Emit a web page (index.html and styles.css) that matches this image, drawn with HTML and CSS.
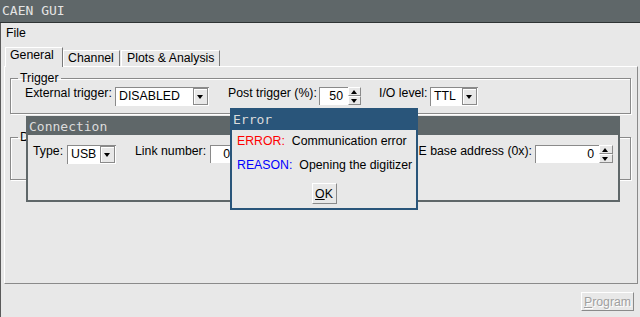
FILE: index.html
```
<!DOCTYPE html>
<html lang="en">
<head>
	<meta charset="UTF-8">
	<title>CAEN GUI</title>
	<link rel="stylesheet" href="styles.css">
</head>
<body>
<div class="titlebar">CAEN GUI</div>
<div class="main">
	<div class="menubar"><span class="menu-item">File</span></div>
	<div class="tabs">
		<span class="tab tab-active tab-general">General</span>
		<span class="tab tab-channel">Channel</span>
		<span class="tab tab-plots">Plots &amp; Analysis</span>
	</div>
	<div class="panel">
		<fieldset class="group group-trigger">
			<legend>Trigger</legend>
			<div class="row">
				<span class="lbl lbl-ext">External trigger:</span>
				<span class="combo combo-ext"><span class="combo-val">DISABLED</span><span class="combo-btn"></span></span>
				<span class="lbl lbl-post">Post trigger (%):</span>
				<span class="spin spin-post"><span class="spin-val">50</span><span class="spin-btns"><span class="spin-up"></span><span class="spin-down"></span></span></span>
				<span class="lbl lbl-io">I/O level:</span>
				<span class="combo combo-io"><span class="combo-val">TTL</span><span class="combo-btn"></span></span>
			</div>
		</fieldset>
		<fieldset class="group group-dig">
			<legend>Digitizer</legend>
		</fieldset>
	</div>
	<div class="footer">
		<button class="btn btn-disabled"><u>P</u>rogram</button>
	</div>
</div>

<div class="win win-conn">
	<div class="win-title">Connection</div>
	<div class="conn-row">
		<span class="lbl lbl-type">Type:</span>
		<span class="combo combo-usb"><span class="combo-val">USB</span><span class="combo-btn"></span></span>
		<span class="lbl lbl-link">Link number:</span>
		<span class="spin spin-link"><span class="spin-val">0</span><span class="spin-btns"><span class="spin-up"></span><span class="spin-down"></span></span></span>
		<span class="lbl lbl-vme">VME base address (0x):</span>
		<span class="spin spin-vme"><span class="spin-val">0</span><span class="spin-btns"><span class="spin-up"></span><span class="spin-down"></span></span></span>
	</div>
</div>

<div class="win win-error">
	<div class="win-title">Error</div>
	<div class="err-body">
		<div class="err-line"><span class="err-key err-red">ERROR:</span><span>Communication error</span></div>
		<div class="err-line"><span class="err-key err-blue">REASON:</span><span>Opening the digitizer</span></div>
		<div class="err-actions"><button class="btn btn-ok"><u>O</u>K</button></div>
	</div>
</div>
</body>
</html>
```
FILE: styles.css
```
*{
	margin: 0;
	padding: 0;
	box-sizing: border-box;
}
body{
	width: 640px;
	height: 317px;
	overflow: hidden;
	background: #e8e8e8;
	color: #000;
	font: 12.3px "Liberation Sans", Arial, sans-serif;
}
.titlebar{
	height: 23px;
	background: #5f6769;
	border-bottom: 1px solid #2e3334;
	color: #e4e4e4;
	font: 13px/22px "DejaVu Sans Mono", monospace;
	padding-left: 2px;
}
.main{
	height: 294px;
	border-left: 1px solid #5a5a5a;
	padding: 0 2px 0 3px;
	display: flex;
	flex-direction: column;
}
.menubar{
	height: 20px;
	line-height: 20px;
	padding-left: 2px;
}
.tabs{
	margin-top: 4px;
	height: 19px;
	padding-left: 1px;
	display: flex;
	align-items: flex-end;
}
.tab{
	height: 16px;
	line-height: 14px;
	padding-left: 4px;
	border-top: 1px solid #fff;
	border-left: 1px solid #fff;
	border-right: 1px solid #7a7a7a;
	white-space: nowrap;
}
.tab-active{
	height: 20px;
	line-height: 15px;
	margin-bottom: -1px;
	background: #e8e8e8;
	position: relative;
	z-index: 1;
}
.tab-general{ width: 58px; }
.tab-channel{ width: 57px; }
.tab-plots{ width: 99px; margin-left: 1px; padding-left: 5px; }
.panel{
	height: 218px;
	border: 1px solid;
	border-color: #fff #8a8a8a #8a8a8a #fff;
	padding: 4px 6px 0 5px;
}
.group{
	border: 1px solid #8a8a8a;
	box-shadow: inset 1px 1px 0 #fff, 1px 1px 0 #fff;
	padding: 0 0 7px 14px;
}
.group legend{
	margin-left: -7px;
	padding: 0 2px;
	line-height: 14px;
}
.group-dig{
	margin-top: 16px;
	height: 50px;
}
.row{
	display: flex;
	align-items: flex-start;
	height: 20px;
	margin-top: 1px;
}
.lbl{
	line-height: 14px;
	white-space: nowrap;
}
.lbl-ext{ width: 90px; }
.lbl-post{ width: 91px; margin-left: 19px; }
.lbl-io{ width: 51px; margin-left: 18px; }

/* combo box */
.combo{
	display: flex;
	margin-top: 1px;
	height: 19px;
	background: #fff;
	border-top: 1px solid #8a8a8a;
	border-left: 1px solid #8a8a8a;
	padding: 0 1px 1px 0;
}
.combo-val{
	flex: 1;
	padding-left: 3px;
	line-height: 17px;
}
.combo-btn{
	width: 15px;
	background: #e8e8e8;
	border: 1px solid #8a8a8a;
	box-shadow: inset 1px 1px 0 #fff;
	position: relative;
}
.combo-btn::after{
	content: "";
	position: absolute;
	left: 3px;
	top: 6px;
	border-left: 3.5px solid transparent;
	border-right: 3.5px solid transparent;
	border-top: 4px solid #000;
}
.combo-ext{ width: 94px; }
.combo-io{ width: 48px; }
.combo-usb{ width: 49px; }

/* number entry */
.spin{
	display: flex;
	margin-top: 1px;
	height: 18px;
}
.spin-val{
	background: #fff;
	border-top: 1px solid #8a8a8a;
	border-left: 1px solid #8a8a8a;
	text-align: right;
	padding-right: 5px;
	line-height: 17px;
}
.spin-btns{
	width: 13px;
	display: flex;
	flex-direction: column;
}
.spin-up, .spin-down{
	height: 9px;
	background: #e8e8e8;
	border: 1px solid;
	border-color: #fff #8a8a8a #8a8a8a #fff;
	position: relative;
}
.spin-up::after, .spin-down::after{
	content: "";
	position: absolute;
	left: 2px;
	border-left: 3.5px solid transparent;
	border-right: 3.5px solid transparent;
}
.spin-up::after{
	top: 2px;
	border-bottom: 4px solid #000;
}
.spin-down::after{
	top: 2px;
	border-top: 4px solid #000;
}
.spin-post .spin-val{ width: 29px; }
.spin-link .spin-val{ width: 26px; padding-right: 6px; }
.spin-vme .spin-val{ width: 64px; }
.spin-vme .spin-btns{ width: 14px; }

.footer{
	flex: 1;
	display: flex;
	justify-content: flex-end;
	align-items: flex-start;
	padding: 8px 4px 0 0;
}
.btn{
	font: 12.3px "Liberation Sans", Arial, sans-serif;
	background: #e8e8e8;
	border: 1px solid;
	border-color: #fff #8a8a8a #8a8a8a #fff;
	color: #000;
}
.btn-disabled{
	width: 53px;
	height: 19px;
	color: #a0a0a0;
	text-shadow: 1px 1px 0 #fff;
}

/* floating windows */
.win{
	position: absolute;
	background: #e8e8e8;
}
.win-title{
	color: #dcdcdc;
	font: 13px/17px "DejaVu Sans Mono", monospace;
	padding-left: 1px;
}
.win-conn{
	left: 26px;
	top: 116px;
	width: 594px;
	height: 86px;
	border: 2px solid #5f6769;
}
.win-conn .win-title{
	height: 17px;
	background: #5f6769;
}
.conn-row{
	display: flex;
	align-items: flex-start;
	padding: 9px 5px 0 5px;
}
.lbl-type{ width: 34px; }
.lbl-link{ width: 75px; margin-left: 19px; }
.lbl-vme{ margin-left: auto; margin-right: 3px; }

.win-error{
	left: 230px;
	top: 108px;
	width: 188px;
	height: 102px;
	border: 2px solid #29557a;
}
.win-error .win-title{
	height: 20px;
	line-height: 20px;
	background: #29557a;
}
.err-body{
	padding: 4px 0 0 5px;
}
.err-line{
	display: flex;
	line-height: 14px;
	white-space: nowrap;
}
.err-line + .err-line{
	margin-top: 10px;
}
.err-key{
	margin-right: 7px;
}
.err-red{ color: #ff0000; }
.err-blue{ color: #0000ff; }
.err-actions{
	display: flex;
	justify-content: center;
	margin-top: 11px;
	padding-right: 5px;
}
.btn-ok{
	width: 25px;
	height: 21px;
}
```
